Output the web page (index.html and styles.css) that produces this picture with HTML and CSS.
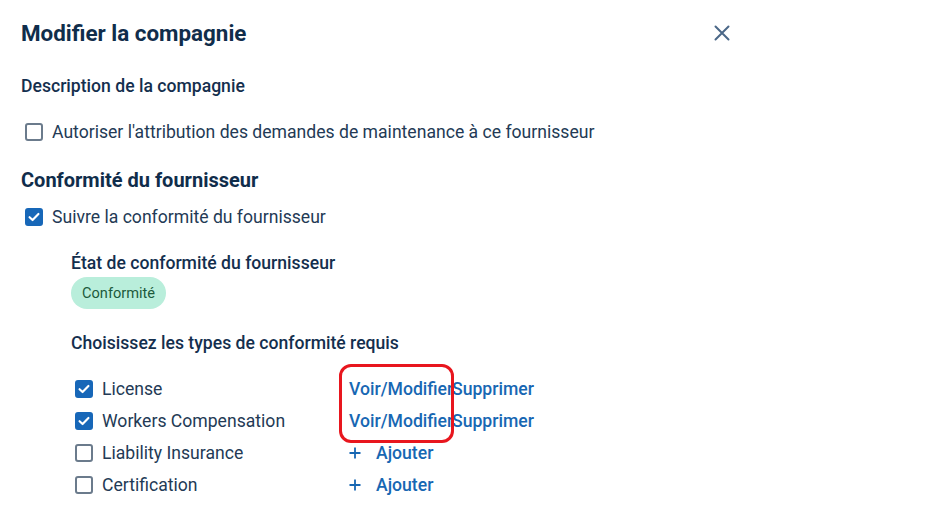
FILE: index.html
```html
<!DOCTYPE html>
<html lang="fr">
<head>
<meta charset="utf-8">
<link rel="stylesheet" href="styles.css">
</head>
<body>
<div class="dialog">
  <header class="dialog-header">
    <h1 class="title">Modifier la compagnie</h1>
    <button class="close" aria-label="Fermer">
      <svg width="16" height="16" viewBox="0 0 16 16"><path d="M1.5 1.5 L14.5 14.5 M14.5 1.5 L1.5 14.5" stroke="#4b6888" stroke-width="2" stroke-linecap="round"/></svg>
    </button>
  </header>

  <h2 class="subhead first">Description de la compagnie</h2>
  <label class="check-line">
    <span class="box"></span>
    <span>Autoriser l'attribution des demandes de maintenance à ce fournisseur</span>
  </label>

  <h2 class="section">Conformité du fournisseur</h2>
  <label class="check-line">
    <span class="box checked"><svg viewBox="0 0 18 18"><path d="M4 9.2 L7.4 12.4 L14 5.6" fill="none" stroke="#fff" stroke-width="2.4" stroke-linecap="round" stroke-linejoin="round"/></svg></span>
    <span>Suivre la conformité du fournisseur</span>
  </label>

  <div class="indent">
    <h3 class="subhead">État de conformité du fournisseur</h3>
    <span class="badge">Conformité</span>

    <h3 class="subhead choose">Choisissez les types de conformité requis</h3>
    <div class="types">
      <div class="type-row">
        <label class="check-line small"><span class="box checked"><svg viewBox="0 0 18 18"><path d="M4 9.2 L7.4 12.4 L14 5.6" fill="none" stroke="#fff" stroke-width="2.4" stroke-linecap="round" stroke-linejoin="round"/></svg></span><span>License</span></label>
        <div class="actions"><a class="link view">Voir/Modifier</a><a class="link">Supprimer</a></div>
      </div>
      <div class="type-row">
        <label class="check-line small"><span class="box checked"><svg viewBox="0 0 18 18"><path d="M4 9.2 L7.4 12.4 L14 5.6" fill="none" stroke="#fff" stroke-width="2.4" stroke-linecap="round" stroke-linejoin="round"/></svg></span><span>Workers Compensation</span></label>
        <div class="actions"><a class="link view">Voir/Modifier</a><a class="link">Supprimer</a></div>
      </div>
      <div class="type-row">
        <label class="check-line small"><span class="box"></span><span>Liability Insurance</span></label>
        <div class="actions"><a class="link add"><svg width="12" height="12" viewBox="0 0 12 12"><path d="M6 0.5 V11.5 M0.5 6 H11.5" stroke="#1767b3" stroke-width="1.8"/></svg>Ajouter</a></div>
      </div>
      <div class="type-row">
        <label class="check-line small"><span class="box"></span><span>Certification</span></label>
        <div class="actions"><a class="link add"><svg width="12" height="12" viewBox="0 0 12 12"><path d="M6 0.5 V11.5 M0.5 6 H11.5" stroke="#1767b3" stroke-width="1.8"/></svg>Ajouter</a></div>
      </div>
    </div>
  </div>
  <div class="annotation"></div>
</div>
</body>
</html>
```
FILE: styles.css
```css
* { box-sizing: border-box; }
html, body { margin: 0; padding: 0; background: #fff; }
body {
  font-family: Roboto, "Liberation Sans", Arial, sans-serif;
  color: #1f3550;
  width: 940px;
  height: 531px;
  overflow: hidden;
}
.dialog {
  position: relative;
  padding: 20px 0 0 21px;
  width: 940px;
}
.dialog-header {
  display: flex;
  align-items: center;
  width: 702px;
  justify-content: space-between;
  height: 26px;
}
.title {
  margin: 0;
  font-size: 22.4px;
  font-weight: 700;
  color: #102d4b;
  line-height: 26px;
}
.close {
  border: 0;
  background: none;
  padding: 0;
  width: 16px;
  height: 16px;
  display: flex;
  margin-right: -7px;
}
.subhead {
  margin: 0;
  font-size: 17.6px;
  font-weight: 500;
  color: #142f4e;
  line-height: 22px;
}
.subhead.first { margin-top: 29px; }
.check-line {
  display: flex;
  align-items: center;
  gap: 9px;
  font-size: 17.6px;
  line-height: 22px;
  color: #233a55;
  margin-top: 24px;
  margin-left: 4px;
}
.box {
  width: 18px;
  height: 18px;
  border: 2px solid #6b7b8c;
  border-radius: 3px;
  flex: none;
  display: flex;
  align-items: center;
  justify-content: center;
}
.box.checked {
  background: #1767b8;
  border-color: #1767b8;
}
.box.checked svg { width: 16px; height: 16px; flex: none; }
.section {
  margin: 25px 0 0;
  font-size: 20px;
  font-weight: 700;
  color: #102d4b;
  line-height: 24px;
}
.section + .check-line { margin-top: 14px; }
.indent { padding-left: 50px; margin-top: 24px; }
.badge {
  display: inline-block;
  margin-top: 3px;
  background: #b9eedb;
  color: #1c5a3c;
  font-size: 14.6px;
  font-weight: 400;
  line-height: 32px;
  height: 32px;
  padding: 0 11px;
  border-radius: 16px;
}
.choose { margin-top: 23px; }
.types { margin-top: 19px; display: flex; flex-direction: column; }
.type-row {
  display: flex;
  align-items: center;
  height: 32px;
}
.check-line.small {
  margin: 0 0 0 4px;
  width: 274px;
}
.actions {
  display: flex;
  align-items: center;
  font-size: 17.6px;
  font-weight: 500;
}
.link {
  color: #1767b3;
  white-space: nowrap;
  cursor: pointer;
}
.link.view {
  width: 103px;
  overflow: visible;
  display: inline-block;
}
.link.add {
  display: flex;
  align-items: center;
  gap: 15px;
}
.annotation {
  position: absolute;
  left: 339px;
  top: 364px;
  width: 115px;
  height: 79px;
  border: 3px solid #e8161e;
  border-radius: 12px;
  pointer-events: none;
}
```
